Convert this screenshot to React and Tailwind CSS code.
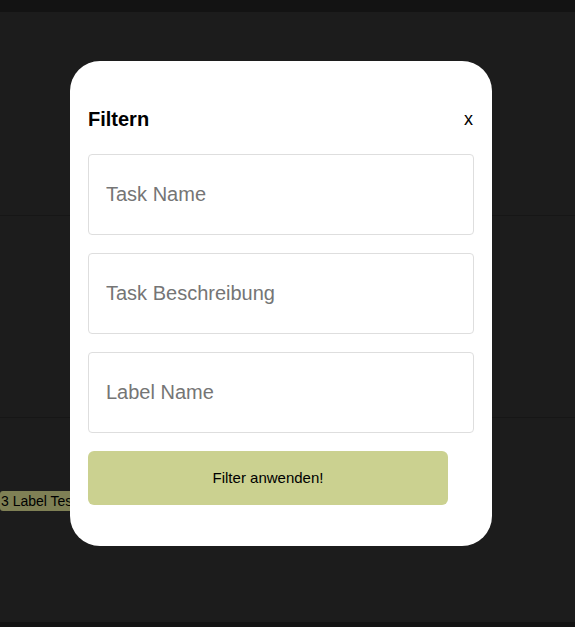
import React from "react";

export default function App() {
  const fields = ["Task Name", "Task Beschreibung", "Label Name"];

  return (
    <div className="relative h-[627px] w-full overflow-hidden bg-[#1c1c1c] font-['Liberation_Sans',Arial,sans-serif]">
      <div className="h-[12px] bg-[#131313]" />
      <div className="h-[204px] border-b border-[#161616]" />
      <div className="h-[202px] border-b border-[#161616]" />
      <div className="flex h-[204px] items-start pt-[73px]">
        <span className="h-[20px] rounded-l-[3px] bg-[#7f8055] pl-[1px] pr-[20px] text-[14px] leading-[20px] text-black">
          3 Label Test
        </span>
      </div>
      <div className="h-[5px] bg-[#131313]" />

      {/* modal */}
      <div className="absolute left-[70px] top-[61px] w-[422px] rounded-[30px] bg-white px-[18px] pb-[41px] pt-[44px]">
        <div className="mb-[21px] flex h-[28px] items-center justify-between">
          <h2 className="text-[20px] font-bold text-black">Filtern</h2>
          <button className="pr-px text-[18px] leading-none text-black">x</button>
        </div>

        <div className="flex flex-col gap-[18px]">
          {fields.map((f) => (
            <input
              key={f}
              placeholder={f}
              className="h-[81px] w-full rounded-[4px] border border-[#dedede] px-[17px] text-[20px] text-black outline-none placeholder:text-[#757575]"
            />
          ))}
        </div>

        <button className="mt-[18px] h-[54px] w-[360px] rounded-[6px] bg-[#cbd190] text-[15px] text-black">
          Filter anwenden!
        </button>
      </div>
    </div>
  );
}
